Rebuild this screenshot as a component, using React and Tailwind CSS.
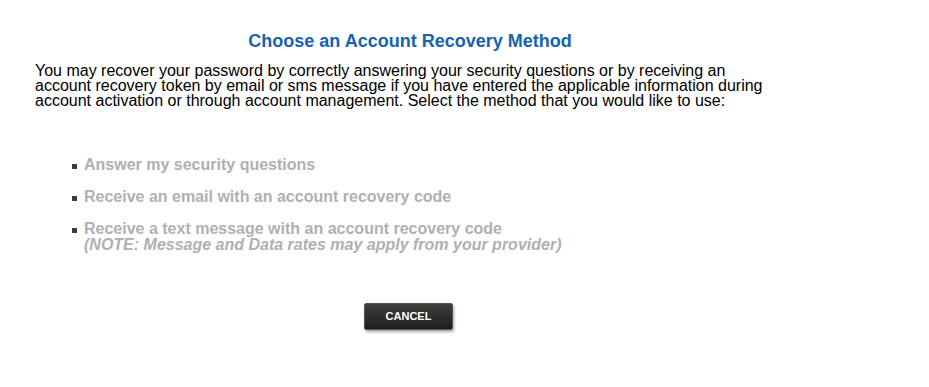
import React from 'react';

const options = [
  { label: 'Answer my security questions' },
  { label: 'Receive an email with an account recovery code' },
  {
    label: 'Receive a text message with an account recovery code',
    note: '(NOTE: Message and Data rates may apply from your provider)',
  },
];

const App = () => {
  return (
    <div className="min-h-screen bg-white font-['Liberation_Sans',Arial,sans-serif]">
      <div className="w-[750px] ml-[35px] pt-[30px]">
        <h1 className="text-center text-[18px] leading-[22px] font-bold text-[#1762b3]">
          Choose an Account Recovery Method
        </h1>
        <p className="mt-[11px] text-[16px] leading-[15px] text-black">
          You may recover your password by correctly answering your security questions or by receiving an
          account recovery token by email or sms message if you have entered the applicable information during
          account activation or through account management. Select the method that you would like to use:
        </p>
        <ul className="mt-[49px] ml-[37px] flex flex-col gap-[16px]">
          {options.map((opt) => (
            <li key={opt.label} className="flex items-start">
              <span className="mt-[7px] mr-[7px] w-[5px] h-[5px] bg-[#3a3a3a] shrink-0" />
              <div className="text-[16px] leading-[16px] font-bold text-[#b0b0b0]">
                <div>{opt.label}</div>
                {opt.note && <div className="italic">{opt.note}</div>}
              </div>
            </li>
          ))}
        </ul>
        <div className="mt-[50px] flex justify-center">
          <button className="mr-[3px] w-[89px] h-[27px] rounded-[2px] bg-gradient-to-b from-[#3d3d3d] to-[#1f1f1f] text-white text-[11px] font-bold shadow-[1px_2px_3px_rgba(0,0,0,0.35)] border border-[#555]">
            CANCEL
          </button>
        </div>
      </div>
    </div>
  );
};

export default App;
